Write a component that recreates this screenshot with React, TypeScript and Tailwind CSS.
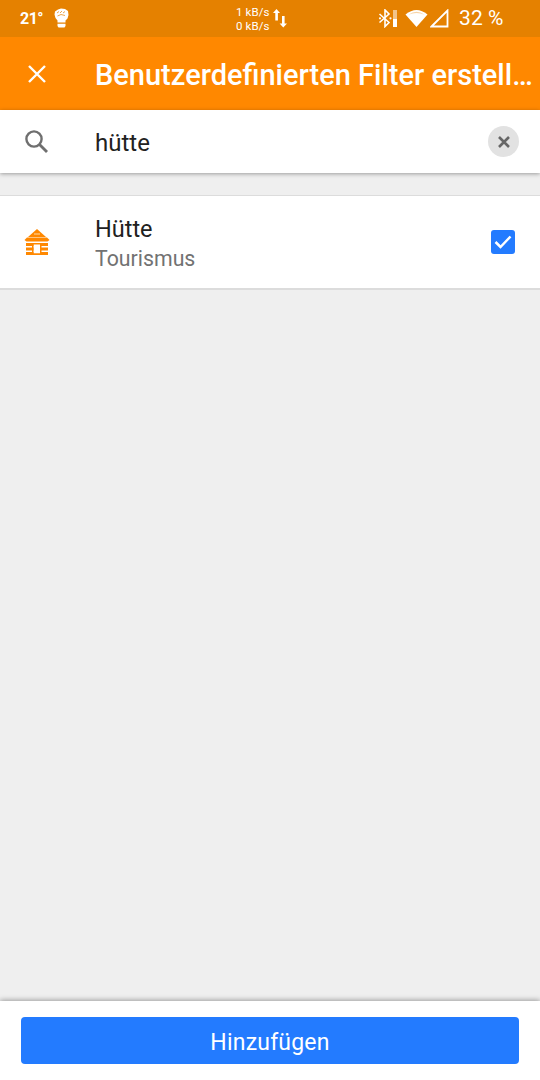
export default function App() {
  return (
    <div className="w-[540px] h-[1080px] flex flex-col bg-[#efefef] overflow-hidden font-['Roboto',sans-serif]">
      <div className="h-[37px] shrink-0 bg-[#e58100] flex items-center text-white relative">
        <span className="ml-[20px] w-[24px] text-[16px] font-bold leading-none tracking-[-0.5px] mt-[1px]">21°</span>
        <svg className="ml-[10px] mt-[-1px]" width="15" height="20" viewBox="0 0 15 20" fill="#fff">
          <path d="M1 3.5 L4 1.5 L7 .5 L11 1 L14 3 L14.5 7 L13.5 10.5 L11.5 12.5 L11.5 14.5 L3.5 14.5 L3.5 12.5 L1.5 10 L.5 6.5 Z" />
          <path d="M3.5 15.8 H11.5 V18 L10.5 19.5 H4.5 L3.5 18 Z" />
          <path d="M3 5 L5 3.5 M6 5 L8 3 M9 5 L11 3.5 M3.5 8 L7 6.5 L11 7.5" stroke="#e58100" strokeWidth=".7" fill="none" />
        </svg>
        <div className="absolute left-[236px] top-[5px] text-[11.5px] leading-[14px] tracking-[0.1px]">
          <div>1 kB/s</div>
          <div>0 kB/s</div>
        </div>
        <svg className="absolute left-[273px] top-[9px]" width="14" height="20" viewBox="0 0 14 20" fill="#fff">
          <path d="M3.5 0 L7 4 H4.9 V11.5 H2.3 V4 H0 Z" />
          <path d="M9 7 H11.6 V14.5 H14 L10.3 18.5 L6.6 14.5 H9 Z" />
        </svg>
        <svg className="absolute left-[378px] top-[9px]" width="21" height="19" viewBox="0 0 21 19" fill="none">
          <path d="M1.5 5 L11 13.5 L7 17.5 V1 L11 5 L1.5 13.5" stroke="#fff" strokeWidth="1.6" />
          <circle cx="2" cy="9.3" r="1.1" fill="#fff" />
          <circle cx="12.5" cy="9.3" r="1.1" fill="#fff" />
          <rect x="15" y="1" width="4" height="9" fill="#f2c48a" />
          <rect x="15" y="10" width="4" height="8" fill="#fff" />
        </svg>
        <svg className="absolute left-[405px] top-[9px]" width="23" height="18" viewBox="0 0 23 18" fill="#fff">
          <path d="M0.5 5.5 Q11.5 -3.5 22.5 5.5 L11.5 18 Z" />
          <path d="M3.5 5.8 Q11.5 -0.5 19.5 5.8 Q11.5 2 3.5 5.8 Z" fill="#e58100" opacity="0.35" />
        </svg>
        <svg className="absolute left-[430px] top-[9px]" width="19" height="19" viewBox="0 0 19 19" fill="none">
          <path d="M1.5 17.5 L17.5 1.5 V17.5 Z" stroke="#fff" strokeWidth="1.8" />
        </svg>
        <span className="absolute left-[459px] top-[7px] text-[21px] leading-[23px] tracking-[0.1px]">32 %</span>
      </div>

      <div className="h-[73px] shrink-0 bg-[#ff8800] flex items-center text-white">
        <svg className="ml-[28px]" width="18" height="18" viewBox="0 0 18 18" fill="none" stroke="#fff" strokeWidth="2.4">
          <path d="M1 1 L17 17 M17 1 L1 17" />
        </svg>
        <span className="ml-[49px] mt-[3px] text-[29px] font-medium leading-[36px] whitespace-nowrap">Benutzerdefinierten Filter erstell…</span>
      </div>

      <div className="h-[63px] shrink-0 bg-white flex items-center shadow-[0_1px_4px_rgba(0,0,0,0.35)] relative">
        <svg className="ml-[24px]" width="25" height="25" viewBox="0 0 25 25" fill="none" stroke="#6f6f6f" strokeWidth="2.4">
          <circle cx="10" cy="10" r="7.6" />
          <path d="M15.5 15.5 L23 23" strokeWidth="2.8" />
        </svg>
        <span className="ml-[46px] mt-[2px] text-[24px] text-[#212121] leading-[28px]">hütte</span>
        <div className="ml-auto mr-[21px] w-[31px] h-[31px] rounded-full bg-[#e2e2e2] flex items-center justify-center">
          <svg width="12" height="12" viewBox="0 0 12 12" fill="none" stroke="#666" strokeWidth="2.6">
            <path d="M1 1 L11 11 M11 1 L1 11" />
          </svg>
        </div>
      </div>

      <div className="mt-[22px] h-[95px] shrink-0 bg-white border-t border-b-2 border-[#dcdcdc] flex items-center">
        <svg className="ml-[24px]" width="26" height="26" viewBox="0 0 26 26" fill="#ff8800">
          <path d="M13 0 L22 8 H4 Z" />
          <path d="M3 8.5 H23 L25.5 11 L23.5 12.5 H2.5 L0.5 11 Z" />
          <path d="M2 14 H24 V17 H2 Z M2 18.5 H24 V21.5 H2 Z M2 23 H24 V26 H2 Z" />
          <rect x="10" y="4.5" width="6" height="1" fill="#ffd9a8" />
          <rect x="9.5" y="15.5" width="6.5" height="9" fill="#fff" />
          <rect x="8" y="14" width="1.5" height="12" />
          <rect x="16" y="14" width="1.5" height="12" />
          <rect x="8" y="24.5" width="9.5" height="1.5" />
        </svg>
        <div className="ml-[45px] flex flex-col mt-[3px]">
          <span className="text-[23.5px] leading-[30px] text-[#212121]">Hütte</span>
          <span className="text-[21.3px] leading-[29px] text-[#727272]">Tourismus</span>
        </div>
        <div className="ml-auto mr-[25px] w-[24px] h-[24px] rounded-[3px] bg-[#237bff] flex items-center justify-center">
          <svg width="18" height="14" viewBox="0 0 18 14" fill="none" stroke="#fff" strokeWidth="2.5">
            <path d="M1.5 7 L6.5 12 L16.5 1.5" />
          </svg>
        </div>
      </div>

      <div className="flex-1" />

      <div className="h-[79px] shrink-0 bg-white flex items-start pt-[16px] px-[21px] shadow-[0_-1px_5px_rgba(0,0,0,0.35)] relative">
        <button className="w-full h-[47px] rounded-[4px] bg-[#237bff] text-white text-[23px] leading-[28px] pt-[5px] tracking-[0.2px]">Hinzufügen</button>
      </div>
    </div>
  );
}
